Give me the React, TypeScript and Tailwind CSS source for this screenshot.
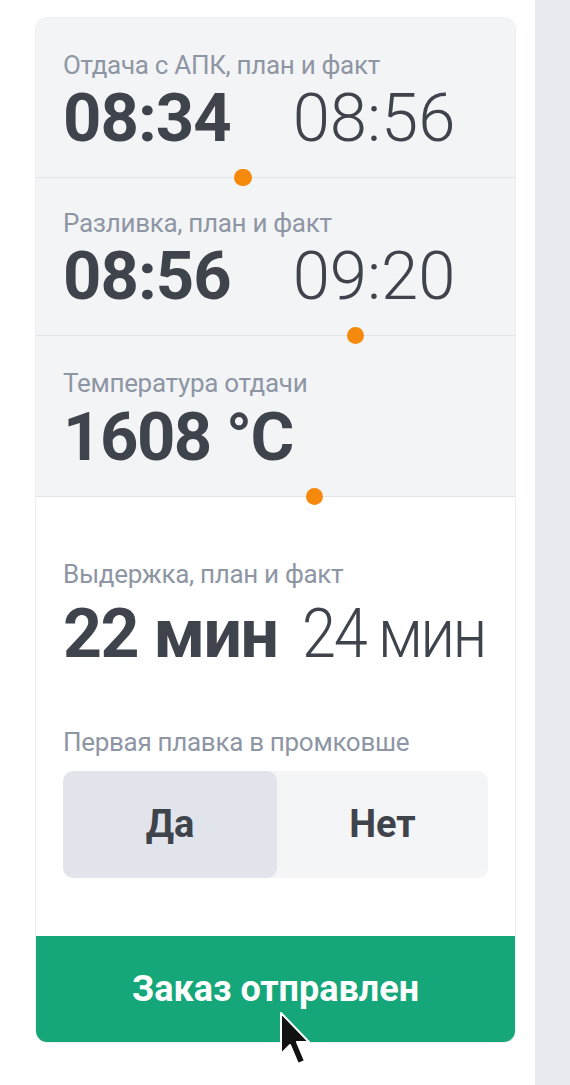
import React from "react";

const font = { fontFamily: "Roboto, 'Noto Sans', Arial, sans-serif" };

export default function App() {
  return (
    <div className="flex h-[1085px] w-[570px] bg-white" style={font}>
      <div className="relative flex-1 bg-white">
        <div className="ml-[35px] mt-[17px] w-[481px] overflow-hidden rounded-[12px] border border-[#eceef1]">
          {/* Section 1 */}
          <div className="relative border-b border-[#e2e4e8] bg-[#f3f4f6] px-[27px] pb-[25px] pt-[32px]">
            <div className="text-[26px] leading-[30px] tracking-[-0.3px] text-[#8e96a4]">
              Отдача с АПК, план и факт
            </div>
            <div className="mt-[5px] flex items-baseline gap-[62px] whitespace-nowrap text-[67px] leading-[67px] text-[#3f434b]">
              <span className="font-bold tracking-[-1px]">08:34</span>
              <span className="font-light">08:56</span>
            </div>
          </div>
          {/* Section 2 */}
          <div className="relative border-b border-[#e2e4e8] bg-[#f3f4f6] px-[27px] pb-[25px] pt-[30px]">
            <span className="absolute left-[199px] top-[-9px] h-[17px] w-[17px] rounded-full bg-[#f5890c]" />
            <div className="text-[26px] leading-[30px] tracking-[-0.3px] text-[#8e96a4]">
              Разливка, план и факт
            </div>
            <div className="mt-[5px] flex items-baseline gap-[62px] whitespace-nowrap text-[67px] leading-[67px] text-[#3f434b]">
              <span className="font-bold tracking-[-1px]">08:56</span>
              <span className="font-light">09:20</span>
            </div>
          </div>
          {/* Section 3 */}
          <div className="relative border-b border-[#e2e4e8] bg-[#f3f4f6] px-[27px] pb-[25px] pt-[32px]">
            <span className="absolute left-[311px] top-[-9px] h-[17px] w-[17px] rounded-full bg-[#f5890c]" />
            <div className="text-[26px] leading-[30px] tracking-[-0.3px] text-[#8e96a4]">
              Температура отдачи
            </div>
            <div className="mt-[6px] flex items-baseline whitespace-nowrap text-[67px] leading-[67px] text-[#3f434b]">
              <span className="font-bold tracking-[-1.5px]">1608 °C</span>
            </div>
          </div>
          {/* Section 4 */}
          <div className="relative bg-white px-[27px] pb-[58px] pt-[62px]">
            <span className="absolute left-[270px] top-[-9px] h-[17px] w-[17px] rounded-full bg-[#f5890c]" />
            <div className="text-[26px] leading-[30px] tracking-[-0.3px] text-[#8e96a4]">
              Выдержка, план и факт
            </div>
            <div className="mt-[11px] flex items-baseline gap-[24px] whitespace-nowrap text-[68px] leading-[68px] text-[#3f434b]">
              <span className="font-bold tracking-[-1.5px]">22 мин</span>
              <span className="inline-block origin-left scale-x-[0.9] font-light tracking-[-2.5px]">24 мин</span>
            </div>
            <div className="mt-[59px] text-[26px] leading-[30px] tracking-[-0.3px] text-[#8e96a4]">
              Первая плавка в промковше
            </div>
            <div className="mt-[14px] flex h-[107px] w-[425px] overflow-hidden rounded-[10px] bg-[#f4f5f7]">
              <div className="flex w-[214px] items-center justify-center rounded-[10px] bg-[#e1e4ea] text-[38px] font-bold text-[#3f434b]">
                Да
              </div>
              <div className="flex flex-1 items-center justify-center text-[38px] font-bold text-[#3f434b]">
                Нет
              </div>
            </div>
          </div>
          {/* Button */}
          <div className="flex h-[106px] items-center justify-center bg-[#15a77a] text-[36px] font-bold text-white">
            Заказ отправлен
          </div>
        </div>
        <span className="absolute left-[234px] top-[169px] h-[17px] w-[17px] rounded-full bg-[#f5890c]" />
        <svg
          className="absolute left-[278px] top-[1010px]"
          width="32"
          height="58"
          viewBox="0 0 32 58"
        >
          <path
            d="M3 3 L3 44 L12 35 L20 54 L27 51 L19 32 L31 32 Z"
            fill="#111"
            stroke="#fff"
            strokeWidth="2"
            strokeLinejoin="round"
          />
        </svg>
      </div>
      <div className="w-[35px] bg-[#e9eaef]" />
    </div>
  );
}
